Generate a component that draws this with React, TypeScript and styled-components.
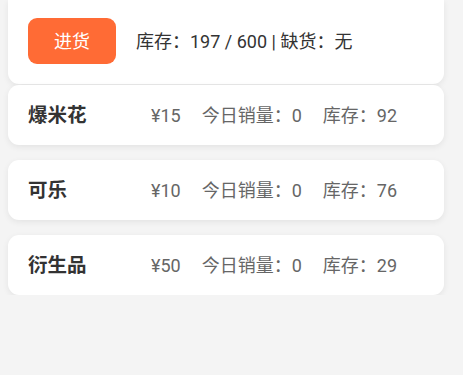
import React from "react";
import styled, { createGlobalStyle } from "styled-components";

const GlobalStyle = createGlobalStyle`
  html, body {
    margin: 0;
    padding: 0;
    background: #f4f4f4;
    font-family: Roboto, "Noto Sans CJK SC", "Noto Sans", sans-serif;
  }
`;

const Page = styled.div`
  display: flex;
  flex-direction: column;
  padding: 0 19px 0 8px;
`;

const HeaderCard = styled.div`
  display: flex;
  align-items: center;
  gap: 20px;
  height: 84px;
  box-sizing: border-box;
  padding: 0 20px 2px;
  background: #fff;
  border-radius: 0 0 11px 11px;
  box-shadow: 0 2px 6px rgba(0, 0, 0, 0.07);
`;

const StockButton = styled.button`
  width: 88px;
  height: 46px;
  border: none;
  border-radius: 9px;
  background: #ff6b35;
  color: #fff;
  font-family: inherit;
  font-size: 18px;
  padding: 1px 0 0;
  line-height: 1;
`;

const Summary = styled.div`
  font-size: 18px;
  line-height: 1;
  color: #333;
  white-space: nowrap;
  padding-top: 1px;
`;

const List = styled.div`
  display: flex;
  flex-direction: column;
  gap: 15px;
  margin-top: 1px;
`;

const Row = styled.div`
  display: flex;
  align-items: center;
  height: 60px;
  box-sizing: border-box;
  padding: 1px 20px 0;
  background: #fff;
  border-radius: 11px;
  box-shadow: 0 2px 6px rgba(0, 0, 0, 0.07);
  line-height: 1;
`;

const Name = styled.div`
  width: 123px;
  font-size: 19.5px;
  font-weight: 700;
  color: #333;
`;

const Detail = styled.span`
  font-size: 18px;
  color: #666;
  margin-right: 21px;
  white-space: nowrap;
`;

const items = [
  { name: "爆米花", price: 15, sold: 0, stock: 92 },
  { name: "可乐", price: 10, sold: 0, stock: 76 },
  { name: "衍生品", price: 50, sold: 0, stock: 29 },
];

export default function App() {
  return (
    <>
      <GlobalStyle />
      <Page>
        <HeaderCard>
          <StockButton>进货</StockButton>
          <Summary>库存：197 / 600 | 缺货：无</Summary>
        </HeaderCard>
        <List>
          {items.map((it) => (
            <Row key={it.name}>
              <Name>{it.name}</Name>
              <Detail>¥{it.price}</Detail>
              <Detail>今日销量：{it.sold}</Detail>
              <Detail>库存：{it.stock}</Detail>
            </Row>
          ))}
        </List>
      </Page>
    </>
  );
}
